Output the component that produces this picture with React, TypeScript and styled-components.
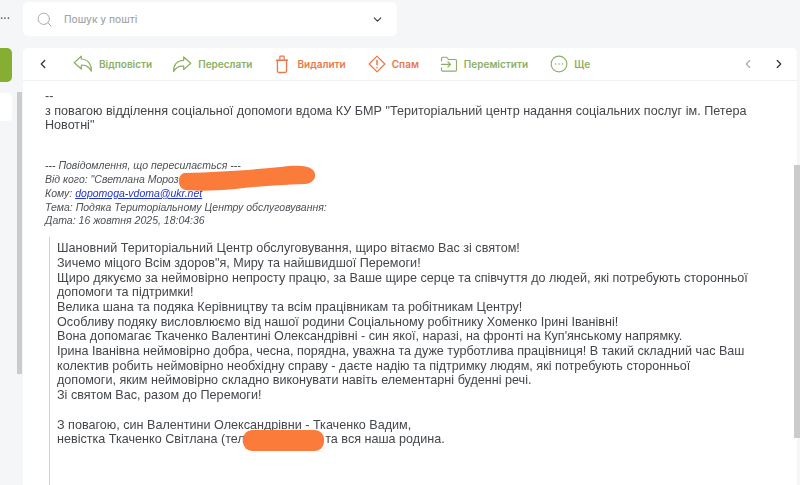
import * as React from 'react';
import styled, { createGlobalStyle } from 'styled-components';
import { ChevronDown, ChevronLeft, ChevronRight, Search } from 'lucide-react';

const GlobalStyle = createGlobalStyle`
  html, body {
    margin: 0;
    height: 485px;
    overflow: hidden;
    background: #f5f6f8;
  }
`;

const Page = styled.div`
  display: grid;
  grid-template-columns: 23px 1fr;
  width: 800px;
  height: 485px;
  overflow: hidden;
  position: relative;
  font-family: 'Liberation Sans', Arial, sans-serif;
  filter: blur(0.35px);
`;

const Sidebar = styled.aside`
  display: flex;
  flex-direction: column;
  position: relative;
`;

const Dots = styled.div`
  height: 48px;
  padding: 3px 0 0 0;
  font: 700 10px/24px 'Inter', sans-serif;
  color: #555;
  box-sizing: border-box;
`;

const ComposeButton = styled.div`
  width: 12px;
  height: 34px;
  background: #85ae33;
  border-radius: 0 5px 5px 0;
`;

const FolderStub = styled.div`
  width: 12px;
  height: 28px;
  margin-top: 11px;
  background: #fff;
  border-radius: 0 4px 4px 0;
`;

const SideScrollThumb = styled.div`
  position: absolute;
  left: 17px;
  top: 92px;
  width: 5px;
  height: 282px;
  background: #c9cbcd;
`;

const Main = styled.main`
  display: flex;
  flex-direction: column;
  padding: 2px 3px 0 0;
  min-width: 0;
`;

const SearchBox = styled.div`
  display: flex;
  align-items: center;
  width: 374px;
  height: 34px;
  box-sizing: border-box;
  padding: 0 13px;
  background: #fff;
  border-radius: 5px;
  font: 500 10.2px 'Inter', sans-serif;
`;

const SearchLabel = styled.span`
  flex: 1;
  margin-left: 11px;
  color: #a5a7aa;
`;

const Panel = styled.section`
  flex: 1;
  margin-top: 12px;
  background: #fff;
  border-radius: 5px 5px 0 0;
  display: flex;
  flex-direction: column;
  min-height: 0;
  position: relative;
`;

const Toolbar = styled.div`
  display: flex;
  align-items: center;
  height: 33px;
  box-sizing: border-box;
  padding: 0 11px 0 13px;
  border-bottom: 1px solid #eeeff0;
`;

const Action = styled.div<{ $tone: 'green' | 'orange'; $gap: number }>`
  display: flex;
  align-items: center;
  gap: 6px;
  margin-left: ${(p) => p.$gap}px;
  color: ${(p) => (p.$tone === 'green' ? '#8cb063' : '#e8794a')};
  font: 600 10px 'Inter', sans-serif;
  white-space: nowrap;
`;

const Pager = styled.div`
  display: flex;
  align-items: center;
  gap: 17px;
  margin-left: auto;
`;

const Body = styled.div`
  flex: 1;
  padding: 8px 0 0 22px;
  color: #43474c;
  font-size: 12.6px;
  line-height: 14.7px;
`;

const Signature = styled.div`
  width: 740px;
`;

const ForwardHeader = styled.div`
  margin-top: 26px;
  font-style: italic;
  font-size: 10.5px;
  line-height: 13.8px;
  color: #4d5156;

  a {
    color: #2233cc;
    text-decoration: underline;
  }
`;

const Quote = styled.blockquote`
  margin: 9px 0 0 4px;
  padding: 4px 0 0 7px;
  border-left: 1px solid #cfd1d3;
  height: 262px;
  width: 736px;
  box-sizing: border-box;
`;

const Gap = styled.div`
  height: 14.7px;
`;

const Redaction = styled.svg`
  position: absolute;
  left: 0;
  top: 0;
  pointer-events: none;
`;

const BodyScrollThumb = styled.div`
  position: absolute;
  right: -3px;
  top: 117px;
  width: 6px;
  height: 273px;
  background: #c9cbcd;
`;

const icon = {
  width: 20,
  height: 20,
  viewBox: '0 0 24 24',
  fill: 'none',
  stroke: 'currentColor',
  strokeWidth: 1.5,
  strokeLinejoin: 'round' as const,
  strokeLinecap: 'round' as const,
};

function ReplyIcon() {
  return (
    <svg {...icon}>
      <path d="M10 2.500 1.500 10.500 10 18V13.500c5-.5 9 1.500 12 7 .5-7-3-14-12-14.500Z" />
    </svg>
  );
}

function ForwardIcon() {
  return (
    <svg {...icon}>
      <path d="M14 3.500 22.500 11 14 18.500V14.500c-5-.5-9 1-12 6.500-.5-7 3.500-13.500 12-13.500Z" />
    </svg>
  );
}

function TrashIcon() {
  return (
    <svg {...icon} width={18} height={20} viewBox="0 0 18 24">
      <path d="M2.500 7.500h13" strokeWidth={1.8} />
      <path d="M6.500 7V2.500h5V7" />
      <path d="M3.500 7.500V20.500c0 1 .7 1.700 1.700 1.700h7.600c1 0 1.700-.7 1.700-1.700V7.500" strokeWidth={1.6} />
    </svg>
  );
}

function SpamIcon() {
  return (
    <svg {...icon} width={18} height={18}>
      <path d="M12 1.500 22.500 12 12 22.500 1.500 12Z" strokeWidth={1.7} />
      <path d="M12 7v6M12 16.800v.2" strokeWidth={2} />
    </svg>
  );
}

function MoveIcon() {
  return (
    <svg {...icon} width={18} height={18}>
      <path d="M2 8V4.500C2 3.500 2.700 3 3.500 3H9l2.500 3h9c.9 0 1.500.6 1.500 1.500V20c0 .9-.6 1.500-1.500 1.500h-17C2.600 21.500 2 21 2 20v-3" />
      <path d="M2 12.500h12M10.500 9l3.500 3.500-3.500 3.500" />
    </svg>
  );
}

function MoreIcon() {
  return (
    <svg {...icon} width={18} height={18}>
      <circle cx="12" cy="12" r="10.500" />
      <path d="M7.500 12h.1M12 12h.1M16.500 12h.1" strokeWidth={1.9} />
    </svg>
  );
}

function App(): JSX.Element {
  return (
    <Page>
      <GlobalStyle />
      <Sidebar>
        <Dots>...</Dots>
        <ComposeButton />
        <FolderStub />
        <SideScrollThumb />
      </Sidebar>
      <Main>
        <SearchBox>
          <Search size={17} color="#a8abae" strokeWidth={1.4} />
          <SearchLabel>Пошук у пошті</SearchLabel>
          <ChevronDown size={13} color="#33383d" strokeWidth={2} />
        </SearchBox>
        <Panel>
          <Toolbar>
            <ChevronLeft size={14} color="#33383d" strokeWidth={2.2} />
            <Action $tone="green" $gap={23}>
              <ReplyIcon />
              Відповісти
            </Action>
            <Action $tone="green" $gap={20}>
              <ForwardIcon />
              Переслати
            </Action>
            <Action $tone="orange" $gap={21}>
              <TrashIcon />
              Видалити
            </Action>
            <Action $tone="orange" $gap={22}>
              <SpamIcon />
              Спам
            </Action>
            <Action $tone="green" $gap={21}>
              <MoveIcon />
              Перемістити
            </Action>
            <Action $tone="green" $gap={22}>
              <MoreIcon />
              Ще
            </Action>
            <Pager>
              <ChevronLeft size={14} color="#a9abad" strokeWidth={2} />
              <ChevronRight size={14} color="#33383d" strokeWidth={2.2} />
            </Pager>
          </Toolbar>
          <Body>
            <Signature>
              --
              <br />
              з повагою відділення соціальної допомоги вдома КУ БМР "Територіальний центр надання соціальних послуг ім. Петера Новотні"
            </Signature>
            <ForwardHeader>
              --- Повідомлення, що пересилається ---
              <br />
              Від кого: "Светлана Мороз
              <br />
              Кому: <a href="#to">dopomoga-vdoma@ukr.net</a>
              <br />
              Тема: Подяка Територіальному Центру обслуговування:
              <br />
              Дата: 16 жовтня 2025, 18:04:36
            </ForwardHeader>
            <Quote>
              Шановний Територіальний Центр обслуговування, щиро вітаємо Вас зі святом!
              <br />
              Зичемо міцого Всім здоров"я, Миру та найшвидшої Перемоги!
              <br />
              Щиро дякуємо за неймовірно непросту працю, за Ваше щире серце та співчуття до людей, які потребують сторонньої допомоги та підтримки!
              <br />
              Велика шана та подяка Керівництву та всім працівникам та робітникам Центру!
              <br />
              Особливу подяку висловлюємо від нашої родини Соціальному робітнику Хоменко Ірині Іванівні!
              <br />
              Вона допомагає Ткаченко Валентині Олександрівні - син якої, наразі, на фронті на Куп'янському напрямку.
              <br />
              Ірина Іванівна неймовірно добра, чесна, порядна, уважна та дуже турботлива працівниця! В такий складний час Ваш колектив робить неймовірно необхідну справу - даєте надію та підтримку людям, які потребують сторонньої
              <br />
              допомоги, яким неймовірно складно виконувати навіть елементарні буденні речі.
              <br />
              Зі святом Вас, разом до Перемоги!
              <Gap />
              З повагою, син Валентини Олександрівни - Ткаченко Вадим,
              <br />
              невістка Ткаченко Світлана (тел&nbsp;&nbsp;&nbsp;&nbsp;&nbsp;&nbsp;&nbsp;&nbsp;&nbsp;&nbsp;&nbsp;&nbsp;&nbsp;&nbsp;&nbsp;&nbsp;&nbsp;&nbsp;&nbsp;&nbsp;&nbsp;&nbsp;&nbsp;та вся наша родина.
            </Quote>
          </Body>
          <BodyScrollThumb />
        </Panel>
      </Main>
      <Redaction width="800" height="485" viewBox="0 0 800 485">
        <path d="M184 173C220 172 250 170 280 167C295 165 308 165 313 170C318 176 314 183 305 184C280 185 260 186 235 189C215 191 195 191 185 190C177 188 177 175 184 173Z" fill="#fb7b3a" />
        <rect x="243" y="430" width="81" height="21" rx="9" fill="#fb7b3a" />
      </Redaction>
    </Page>
  );
}

export default App;
